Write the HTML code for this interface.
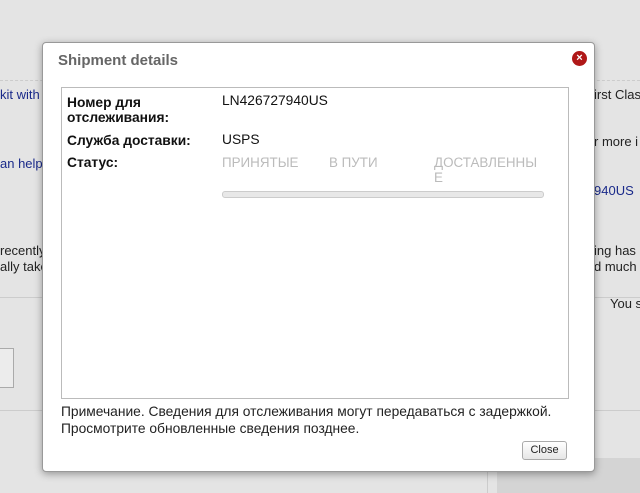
<!DOCTYPE html>
<html><head><meta charset="utf-8"><style>
body{margin:0;width:640px;height:493px;background:#e4e4e4;position:relative;overflow:hidden;font-family:"Liberation Sans",Arial,sans-serif;font-size:13px;}
.a{position:absolute;white-space:nowrap;color:#222;}
.b{color:#1a2a8a;}
.dlg{position:absolute;left:42px;top:42px;width:551px;height:428px;background:#fff;border:1px solid #999;border-radius:4px;box-shadow:0 2px 8px rgba(0,0,0,.35);}
.t{position:absolute;left:15px;top:9px;font-size:15px;font-weight:bold;color:#666;}
.x{position:absolute;left:529px;top:8px;width:15px;height:15px;border-radius:50%;background:#b01818;color:#fff;font-size:11px;font-weight:bold;text-align:center;line-height:15px;}
.box{position:absolute;left:18px;top:44px;width:506px;height:310px;border:1px solid #bbb;}
.l{position:absolute;font-weight:bold;color:#111;font-size:13.8px;line-height:15px;white-space:nowrap;}
.v{position:absolute;color:#111;font-size:13.8px;}
.g{position:absolute;color:#bbb;font-size:13.4px;line-height:15px;}
.bar{position:absolute;left:160px;top:103px;width:320px;height:5px;border-radius:3px;background:#e8e8e8;border:1px solid #ccc;}
.note{position:absolute;left:18px;top:360px;font-size:13.8px;line-height:17px;color:#222;white-space:nowrap;}
.btn{position:absolute;left:479px;top:398px;width:43px;height:17px;border:1px solid #aaa;border-radius:3px;background:linear-gradient(#fff,#e6e6e6);font-size:11px;text-align:center;line-height:17px;color:#222;}
</style></head><body>
<div style="position:absolute;left:0;top:80px;width:640px;border-top:1px dashed #ccc"></div>
<div style="position:absolute;left:0;top:297px;width:640px;border-top:1px solid #ccc"></div>
<div style="position:absolute;left:0;top:410px;width:640px;border-top:1px solid #ccc"></div>
<div style="position:absolute;left:487px;top:410px;height:83px;border-left:1px solid #ccc"></div>
<div style="position:absolute;left:497px;top:458px;width:143px;height:35px;background:#d4d4d4"></div>
<div style="position:absolute;left:-2px;top:348px;width:14px;height:38px;border:1px solid #aaa;background:#ececec"></div>
<div class="a b" style="left:0;top:87px">kit with</div>
<div class="a b" style="left:0;top:156px">an help</div>
<div class="a" style="left:0;top:243px">recently</div>
<div class="a" style="left:0;top:259px">ally take</div>
<div class="a" style="left:594px;top:87px">irst Class</div>
<div class="a" style="left:594px;top:134px">r more i</div>
<div class="a b" style="left:594px;top:183px">940US</div>
<div class="a" style="left:594px;top:243px">ing has</div>
<div class="a" style="left:594px;top:259px">d much</div>
<div class="a" style="left:610px;top:296px">You s</div>
<div class="dlg">
<div class="t">Shipment details</div>
<div class="x">×</div>
<div class="box">
<div class="l" style="left:5px;top:7px">Номер для<br>отслеживания:</div>
<div class="v" style="left:160px;top:5px">LN426727940US</div>
<div class="l" style="left:5px;top:45px">Служба доставки:</div>
<div class="v" style="left:160px;top:44px">USPS</div>
<div class="l" style="left:5px;top:67px">Статус:</div>
<div class="g" style="left:160px;top:67px">ПРИНЯТЫЕ</div>
<div class="g" style="left:267px;top:67px">В ПУТИ</div>
<div class="g" style="left:372px;top:67px">ДОСТАВЛЕННЫ<br>Е</div>
<div class="bar"></div>
</div>
<div class="note">Примечание. Сведения для отслеживания могут передаваться с задержкой.<br>Просмотрите обновленные сведения позднее.</div>
<div class="btn">Close</div>
</div>
</body></html>
